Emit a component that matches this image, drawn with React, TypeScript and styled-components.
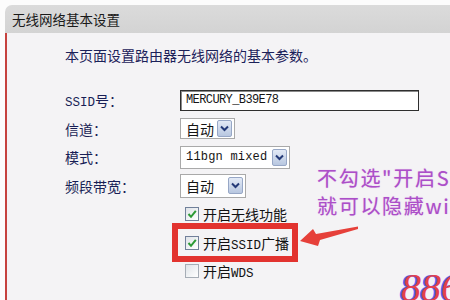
import React from "react";
import styled, { createGlobalStyle } from "styled-components";

const GlobalStyle = createGlobalStyle`
  html, body { margin: 0; padding: 0; }
  body {
    width: 450px;
    height: 300px;
    overflow: hidden;
    background: #fcfcfc;
    font-family: "Noto Sans CJK SC", "Noto Sans", sans-serif;
  }
`;

const Page = styled.div`
  position: relative;
  box-sizing: border-box;
  width: 450px;
  height: 300px;
  padding: 5px 0 0 5px;
  overflow: hidden;
  background: #fcfcfc;
`;

const Panel = styled.div`
  display: flex;
  flex-direction: column;
  height: 100%;
`;

const TitleBar = styled.div`
  height: 28px;
  display: flex;
  align-items: center;
  padding-left: 7px;
  background: linear-gradient(#dbdbdb, #d3d3d3);
  border-top-left-radius: 7px;
  color: #1a1a1a;
  font-size: 13.5px;
`;

const Body = styled.div`
  flex: 1;
  background: #f4f3f5;
  border-left: 2px solid #c6423e;
  padding: 12px 0 0 58px;
`;

const Description = styled.div`
  font-size: 14px;
  line-height: 20px;
  color: #1b2159;
  white-space: nowrap;
`;

const Form = styled.div`
  display: grid;
  grid-template-columns: 115px 1fr;
  grid-auto-rows: 28.5px;
  align-items: center;
  margin-top: 21px;
`;

const Label = styled.div`
  font-size: 14px;
  color: #181e55;
  white-space: nowrap;
`;

const Mono = styled.span`
  font-family: "Liberation Mono", monospace;
  font-size: 12.5px;
`;

const TextInput = styled.div`
  box-sizing: border-box;
  width: 239px;
  height: 21px;
  display: flex;
  align-items: center;
  padding-left: 5px;
  background: #fff;
  border: 1px solid #2e2e2e;
  box-shadow: inset 1px 1px 0 #8a8a8a;
  font-family: "Liberation Mono", monospace;
  font-size: 12px;
  letter-spacing: -0.6px;
  color: #151515;
`;

const Select = styled.div<{ $w: number; $h: number }>`
  box-sizing: border-box;
  width: ${(p) => p.$w}px;
  height: ${(p) => p.$h}px;
  display: flex;
  align-items: center;
  justify-content: space-between;
  padding: 0 2px 0 5px;
  background: #fff;
  border: 1px solid #a9a9a9;
  font-size: 14px;
  color: #151515;
`;

const SelectText = styled.span<{ $mono?: boolean }>`
  font-family: ${(p) =>
    p.$mono ? '"Liberation Mono", monospace' : '"Noto Sans CJK SC", sans-serif'};
  font-size: ${(p) => (p.$mono ? "12px" : "14px")};
  letter-spacing: ${(p) => (p.$mono ? "0.2px" : "0")};
  white-space: nowrap;
`;

const ArrowButton = styled.span`
  box-sizing: border-box;
  width: 15px;
  height: 17px;
  display: flex;
  align-items: center;
  justify-content: center;
  background: linear-gradient(#e3eaf6, #b8c7e0);
  border: 1px solid #97a7c6;
  border-radius: 2px;
`;

const CheckRow = styled.div`
  grid-column: 2;
  display: flex;
  align-items: center;
  gap: 4px;
  padding-left: 5px;
  font-size: 14px;
  color: #111;
  white-space: nowrap;
`;

const Box = styled.span<{ $on: boolean }>`
  box-sizing: border-box;
  width: 14px;
  height: 14px;
  display: flex;
  align-items: center;
  justify-content: center;
  border: 1px solid ${(p) => (p.$on ? "#71809a" : "#a6adb6")};
  background: linear-gradient(135deg, #dfe3e8, #ffffff);
`;

const Highlight = styled.div`
  position: absolute;
  left: 172px;
  top: 223px;
  width: 126px;
  height: 39px;
  box-sizing: border-box;
  border: 6px solid #e2332f;
`;

const ArrowSvg = styled.svg`
  position: absolute;
  left: 295px;
  top: 222px;
`;

const Note = styled.div`
  position: absolute;
  left: 317px;
  top: 164px;
  font-size: 20px;
  letter-spacing: 1.7px;
  line-height: 28px;
  color: #ab4fc8;
  text-shadow: 0 0 1px rgba(205, 100, 215, 0.6);
  white-space: nowrap;
`;

const Watermark = styled.div`
  position: absolute;
  left: 401px;
  top: 268px;
  font-family: "Liberation Serif", serif;
  font-style: italic;
  font-size: 40px;
  line-height: 40px;
  color: #e5404c;
  text-shadow: -2px 0 0 #5a5ef0;
  white-space: nowrap;
`;

const Chevron = () => (
  <svg width="11" height="11" viewBox="0 0 11 11">
    <path d="M2 3.5 L5.5 7 L9 3.5" fill="none" stroke="#243a78" strokeWidth="2" />
  </svg>
);

const Check = () => (
  <svg width="12" height="12" viewBox="0 0 12 12">
    <path d="M2.5 6 L5 8.8 L9.8 2.8" fill="none" stroke="#2c9a35" strokeWidth="2" />
  </svg>
);

const CheckItem = ({ on, children }: { on: boolean; children: React.ReactNode }) => (
  <CheckRow>
    <Box $on={on}>{on && <Check />}</Box>
    <span>{children}</span>
  </CheckRow>
);

export default function App() {
  return (
    <>
      <GlobalStyle />
      <Page>
        <Panel>
          <TitleBar>无线网络基本设置</TitleBar>
          <Body>
            <Description>本页面设置路由器无线网络的基本参数。</Description>
            <Form>
              <Label>
                <Mono>SSID</Mono>号：
              </Label>
              <TextInput>MERCURY_B39E78</TextInput>

              <Label>信道：</Label>
              <Select $w={55} $h={21}>
                <SelectText>自动</SelectText>
                <ArrowButton>
                  <Chevron />
                </ArrowButton>
              </Select>

              <Label>模式：</Label>
              <Select $w={110} $h={23}>
                <SelectText $mono>11bgn mixed</SelectText>
                <ArrowButton>
                  <Chevron />
                </ArrowButton>
              </Select>

              <Label>频段带宽：</Label>
              <Select $w={66} $h={24}>
                <SelectText>自动</SelectText>
                <ArrowButton>
                  <Chevron />
                </ArrowButton>
              </Select>

              <CheckItem on>开启无线功能</CheckItem>
              <CheckItem on>
                开启<Mono>SSID</Mono>广播
              </CheckItem>
              <CheckItem on={false}>
                开启<Mono>WDS</Mono>
              </CheckItem>
            </Form>
          </Body>
        </Panel>

        <Highlight />
        <ArrowSvg width="70" height="30" viewBox="295 222 70 30">
          <polygon
            points="300,241 313,229 316,234 358,226.5 358,229 320,240 318,246"
            fill="#e6403a"
          />
        </ArrowSvg>
        <Note>
          <div>不勾选"开启SSID广播"</div>
          <div>就可以隐藏wifi</div>
        </Note>
        <Watermark>886</Watermark>
      </Page>
    </>
  );
}
